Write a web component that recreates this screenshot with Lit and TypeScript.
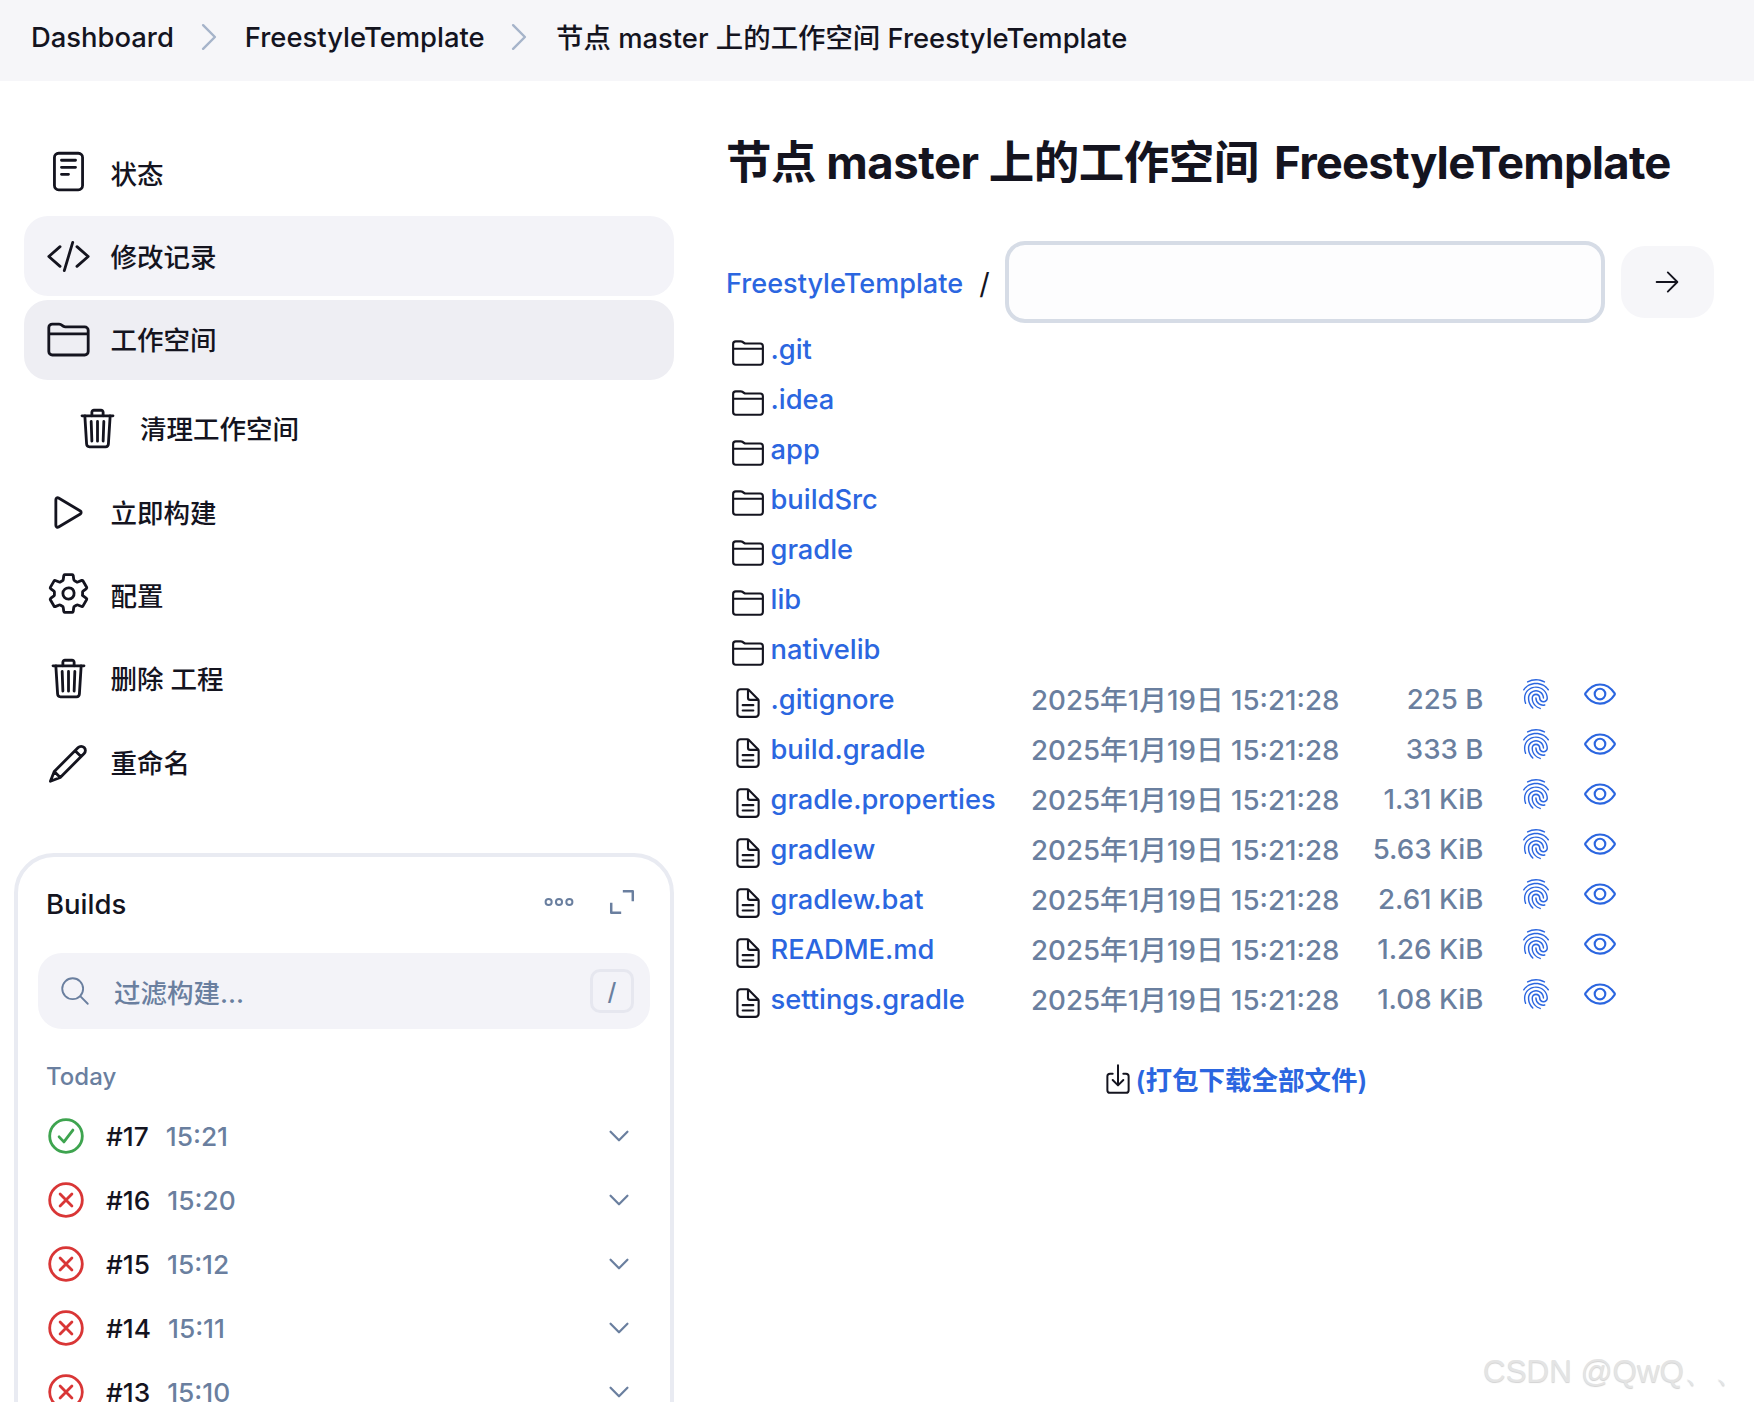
import { LitElement, html, css, svg } from "lit";
import { customElement } from "lit/decorators.js";

const I: Record<string, any> = {
  reader: svg`<rect x="96" y="48" width="320" height="416" rx="48" ry="48"/><path d="M176 128h160M176 208h160M176 288h80"/>`,
  code: svg`<path d="M160 368L32 256l128-112M352 368l128-112-128-112M304 96l-96 320"/>`,
  folder: svg`<path d="M440 432H72a40 40 0 01-40-40V120a40 40 0 0140-40h75.89a40 40 0 0122.19 6.72l27.84 18.56a40 40 0 0022.19 6.72H440a40 40 0 0140 40v240a40 40 0 01-40 40zM32 192h448"/>`,
  trash: svg`<path d="M112 112l20 320c.95 18.49 14.4 32 32 32h184c17.67 0 30.87-13.51 32-32l20-320"/><path d="M80 112h352"/><path d="M192 112V72h0a23.93 23.93 0 0124-24h80a23.93 23.93 0 0124 24h0v40M256 176v224M184 176l8 224M328 176l-8 224"/>`,
  play: svg`<path d="M112 111v290c0 17.44 17 28.52 31 20.16l247.9-148.37c12.12-7.25 12.12-26.33 0-33.58L143 90.84c-14-8.36-31 2.72-31 20.16z"/>`,
  gear: svg`<path d="M262.29 192.31a64 64 0 1057.4 57.4 64.13 64.13 0 00-57.4-57.4zM416.39 256a154.34 154.34 0 01-1.53 20.79l45.21 35.46a10.81 10.81 0 012.45 13.75l-42.77 74a10.81 10.81 0 01-13.14 4.59l-44.9-18.08a16.11 16.11 0 00-15.17 1.75A164.48 164.48 0 01325 400.8a15.94 15.94 0 00-8.82 12.14l-6.73 47.89a11.08 11.08 0 01-10.68 9.17h-85.54a11.11 11.11 0 01-10.69-8.87l-6.72-47.82a16.07 16.07 0 00-9-12.22 155.3 155.3 0 01-21.46-12.57 16 16 0 00-15.11-1.71l-44.89 18.07a10.81 10.81 0 01-13.14-4.58l-42.77-74a10.8 10.8 0 012.45-13.75l38.21-30a16.05 16.05 0 006-14.08c-.36-4.17-.58-8.33-.58-12.5s.21-8.27.58-12.35a16 16 0 00-6.07-13.94l-38.19-30A10.81 10.81 0 0149.48 186l42.77-74a10.81 10.81 0 0113.14-4.59l44.9 18.08a16.11 16.11 0 0015.17-1.75A164.48 164.48 0 01187 111.2a15.94 15.94 0 008.82-12.14l6.73-47.89A11.08 11.08 0 01213.23 42h85.54a11.11 11.11 0 0110.69 8.87l6.72 47.82a16.07 16.07 0 009 12.22 155.3 155.3 0 0121.46 12.57 16 16 0 0015.11 1.71l44.89-18.07a10.81 10.81 0 0113.14 4.58l42.77 74a10.8 10.8 0 01-2.45 13.75l-38.21 30a16.05 16.05 0 00-6.05 14.08c.33 4.14.55 8.3.55 12.47z"/>`,
  pencil: svg`<path d="M50 470L94 358L366 86A48 48 0 01434 154L162 426ZM331 121L399 189M94 358L162 426"/>`,
  search: svg`<path d="M221.09 64a157.09 157.09 0 10157.09 157.09A157.1 157.1 0 00221.09 64z"/><path d="M338.29 338.29L448 448"/>`,
  arrow: svg`<path d="M268 112l144 144-144 144M392 256H100"/>`,
  down: svg`<path d="M112 184l144 144 144-144"/>`,
  right: svg`<path d="M184 112l144 144-144 144"/>`,
  doc: svg`<path d="M416 221.25V416a48 48 0 01-48 48H144a48 48 0 01-48-48V96a48 48 0 0148-48h98.75a32 32 0 0122.62 9.37l141.26 141.26a32 32 0 019.37 22.62z"/><path d="M256 56v120a32 32 0 0032 32h120M176 288h160M176 368h160"/>`,
  eye: svg`<path d="M255.66 112c-77.94 0-157.89 45.11-220.83 135.33a16 16 0 00-.27 17.77C82.92 340.8 161.8 400 255.66 400c92.84 0 173.34-59.38 221.79-135.25a16.14 16.14 0 000-17.47C428.89 172.28 347.8 112 255.66 112z"/><circle cx="256" cy="256" r="80"/>`,
  dl: svg`<path d="M336 176h40a40 40 0 0140 40v208a40 40 0 01-40 40H136a40 40 0 01-40-40V216a40 40 0 0140-40h40"/><path d="M176 272l80 80 80-80M256 48v288"/>`,
  dots: svg`<circle cx="100" cy="256" r="46"/><circle cx="256" cy="256" r="46"/><circle cx="412" cy="256" r="46"/>`,
  expand: svg`<path d="M270 72h170v170M242 440H72V270"/>`,
  ok: svg`<circle cx="256" cy="256" r="232"/><path d="M158 268l68 72 128-168"/>`,
  bad: svg`<circle cx="256" cy="256" r="232"/><path d="M172 172l168 168M340 172L172 340"/>`,
};
const FP = "M390.42 75.28a10.45 10.45 0 01-5.32-1.44C340.72 50.08 302.35 40 256.35 40c-45.77 0-89.23 11.28-128.76 33.84C122 77 115.11 74.8 111.87 69a12.4 12.4 0 014.63-16.32A281.81 281.81 0 01256.35 16c49.23 0 92.23 11.28 139.39 36.48a12 12 0 014.85 16.08 11.3 11.3 0 01-10.17 6.72zm-330.79 126a11.73 11.73 0 01-6.7-2.16 12.26 12.26 0 01-2.78-16.8c22.89-33.6 52-60 86.69-78.48 72.58-38.84 165.51-39.12 238.32-.24 34.68 18.48 63.8 44.64 86.69 78a12.29 12.29 0 01-2.78 16.8 11.26 11.26 0 01-16.18-2.88c-20.8-30.24-47.15-54-78.36-70.56-66.34-35.28-151.18-35.28-217.29.24-31.44 16.8-57.79 40.8-78.59 71a10 10 0 01-9.02 4.08zM204.1 491a10.66 10.66 0 01-8.09-3.6C175.9 466.48 165 453 149.55 424c-16-29.52-24.27-65.52-24.27-104.16 0-71.28 58.71-129.36 130.84-129.36S387 248.56 387 319.84a11.56 11.56 0 11-23.11 0c0-58.08-48.32-105.36-107.72-105.36S148.4 261.76 148.4 319.84c0 34.56 7.39 66.48 21.49 92.4 14.8 27.6 25 39.36 42.77 58.08a12.67 12.67 0 010 17 12.44 12.44 0 01-8.56 3.68zm165.75-44.4c-27.51 0-51.78-7.2-71.66-21.36a129.1 129.1 0 01-55-105.36 11.57 11.57 0 1123.12 0 104.28 104.28 0 0044.84 85.44c16.41 11.52 35.6 17 58.72 17a147.41 147.41 0 0024-2.4c6.24-1.2 12.25 3.12 13.4 9.84a11.92 11.92 0 01-9.47 13.92 152.28 152.28 0 01-27.95 2.88zM323.38 496a13 13 0 01-3-.48c-36.76-10.56-60.8-24.72-86-50.4-32.37-33.36-50.16-77.76-50.16-125.28 0-38.88 32.36-70.56 72.2-70.56s72.2 31.68 72.2 70.56c0 25.68 21.5 46.56 48.08 46.56s48.08-20.88 48.08-46.56c0-90.48-76.27-163.92-170.13-163.92-66.66 0-127.67 38.4-155.18 97.92-9.24 19.68-13.87 42.72-13.87 66 0 17.52 1.55 45.12 14.57 81.12 2.32 6.24-.69 13.2-6.7 15.36a11.34 11.34 0 01-14.8-7 276.39 276.39 0 01-15.95-89.52c0-26.88 5.09-51.36 15.18-72.72 31.21-67.92 100.48-112 176.52-112 106.61 0 193.25 84.24 193.25 188 0 38.88-32.37 70.56-72.2 70.56s-72.2-31.68-72.2-70.56c0-25.68-21.5-46.56-48.08-46.56s-48.08 20.88-48.08 46.56c0 41 15.26 79.44 43.23 108.24 22 22.56 43 35 75.59 44.4 6.24 1.68 9.71 8.4 8.09 14.64a11.39 11.39 0 01-10.8 8.88z";

const icon = (name: string, cls = "") =>
  html`<svg class="ic ${cls}" viewBox="0 0 512 512">${I[name]}</svg>`;

const NAV = [
  { i: "reader", t: "状态", k: "lift" },
  { i: "code", t: "修改记录", c: "hover" },
  { i: "folder", t: "工作空间", c: "active" },
  { i: "trash", t: "清理工作空间", c: "sub" },
  { i: "play", t: "立即构建" },
  { i: "gear", t: "配置", k: "lift" },
  { i: "trash", t: "删除 工程" },
  { i: "pencil", t: "重命名" },
];
const BUILDS = [
  { n: "#17", t: "15:21", ok: true },
  { n: "#16", t: "15:20" },
  { n: "#15", t: "15:12" },
  { n: "#14", t: "15:11" },
  { n: "#13", t: "15:10" },
];
const DIRS = [".git", ".idea", "app", "buildSrc", "gradle", "lib", "nativelib"];
const FILES = [
  [".gitignore", "225 B"],
  ["build.gradle", "333 B"],
  ["gradle.properties", "1.31 KiB"],
  ["gradlew", "5.63 KiB"],
  ["gradlew.bat", "2.61 KiB"],
  ["README.md", "1.26 KiB"],
  ["settings.gradle", "1.08 KiB"],
];

@customElement("app-root")
export class AppRoot extends LitElement {
  static styles = css`
    :host {
      display: block;
      position: relative;
      width: 1754px;
      height: 1402px;
      overflow: hidden;
      background: #fff;
      color: #14141f;
      font-family: Inter, "Noto Sans CJK SC", sans-serif;
      font-size: 27.5px;
      font-weight: 500;
    }
    * { box-sizing: border-box; }
    a { color: inherit; text-decoration: none; }
    .ic {
      display: block;
      flex: none;
      width: 45px;
      height: 45px;
      fill: none;
      stroke: currentColor;
      stroke-width: 32;
      stroke-linecap: round;
      stroke-linejoin: round;
    }
    .crumbs {
      height: 81px;
      background: #f6f6f9;
      display: flex;
      align-items: center;
      padding: 0 0 7px 31px;
      font-size: 27.4px;
    }
    .crumbs .sep { width: 42px; height: 42px; color: #a6b4ca; margin: 0 14.5px 0 14.5px; stroke-width: 30; }
    .crumbs .sep2 { margin: 0 16px 0 13.5px; }
    .crumbs .cur { margin-bottom: 3px; }
    .layout { display: grid; grid-template-columns: 726px 1fr; }
    nav { padding: 52px 0 0 24px; width: 674px; display: flex; flex-direction: column; gap: 3.3px; }
    .item {
      height: 80px;
      border-radius: 24px;
      display: flex;
      align-items: center;
      gap: 20px;
      padding-left: 21.5px;
      font-size: 26.5px;
    }
    .item span { margin-bottom: 2px; }
    .item .lift { margin-bottom: 3px; }
    .item.hover { background: #f3f3f8; }
    .item.active { background: #eeeef3; }
    .item.sub { padding-left: 51px; margin-top: 6px; }
    .card {
      margin: 51px 0 0 14px;
      width: 660px;
      height: 700px;
      border: 4px solid #e9ebf2;
      border-radius: 40px;
    }
    .head {
      height: 94px;
      margin-bottom: 2px;
      padding: 0 33px 0 28px;
      display: flex;
      align-items: center;
    }
    .head .title { flex: 1; font-size: 27.5px; }
    .slate { color: #6a7f9f; }
    .head .dots { width: 34px; height: 34px; margin: 0 31.5px 4px 0; stroke-width: 30; }
    .head .expand { width: 30px; height: 30px; margin-bottom: 4px; stroke-width: 42; stroke-linecap: butt; stroke-linejoin: round; }
    .filter {
      margin: 0 20px 0 20px;
      height: 76px;
      background: #f3f3f8;
      border-radius: 24px;
      display: flex;
      align-items: center;
      padding: 0 16px 0 20px;
      font-size: 26.5px;
    }
    .filter .search { width: 34px; height: 34px; margin-right: 22px; stroke-width: 28; }
    .filter .ph { flex: 1; }
    .kbd {
      width: 44px;
      height: 44px;
      border: 3px solid #e6e7ef;
      border-radius: 10px;
      display: flex;
      align-items: center;
      justify-content: center;
      font-size: 24px;
    }
    .today { margin: 33px 0 12px 28px; height: 30px; line-height: 30px; font-size: 24px; }
    .build {
      height: 64px;
      display: flex;
      align-items: center;
      padding: 0 36px 0 30px;
      font-size: 26.3px;
    }
    .build .st { width: 36px; height: 36px; stroke-width: 40; margin-right: 22px; }
    .build .st.good { color: #3ea44f; }
    .build .st.fail { color: #d93636; }
    .build .time { flex: 1; margin-left: 17px; }
    .build .chev { width: 30px; height: 30px; stroke-width: 38; }
    main { padding: 52px 12px 0 0; }
    h1 {
      margin: 0 0 48px;
      font-size: 45.5px;
      line-height: 60px;
      font-weight: 700;
      letter-spacing: -0.5px;
      white-space: nowrap;
    }
    h1 span { margin-left: 5px; letter-spacing: -0.8px; }
    .link { color: #2b66e0; }
    .path { display: flex; align-items: center; height: 82px; }
    .path .link { font-size: 27.1px; margin-top: 2px; }
    .path .slash { margin: 2px 15px 0 16px; font-weight: 400; font-size: 29px; }
    .path .input {
      width: 600px;
      height: 82px;
      border: 4px solid #d6dce6;
      border-radius: 20px;
      background: #fdfdfe;
    }
    .path .go {
      margin-left: 16px;
      width: 93px;
      height: 72px;
      border-radius: 24px;
      background: #f6f6f9;
      display: flex;
      align-items: center;
      justify-content: center;
    }
    .path .go .ic { width: 34px; height: 34px; stroke-width: 28; }
    .row {
      height: 50px;
      display: flex;
      align-items: center;
      padding-left: 5px;
      white-space: nowrap;
      font-size: 27.7px;
    }
    .row > .ic { width: 34px; height: 34px; margin: 9px 5.5px 0 0; }
    .row .link { font-size: 27.3px; margin-top: 2px; }
    .row .name { width: 260.5px; }
    .row .date { width: 307px; }
    .row .size { width: 145.5px; text-align: right; margin-top: 2px; }
    .row .fp { width: 32px; height: 32px; margin: -9px 0 0 36.5px; fill: #2b66e0; }
    .row .eye { width: 34px; height: 34px; margin: -9px 0 0 31px; color: #2b66e0; stroke-width: 32; }
    .zip {
      margin-top: 36px;
      display: flex;
      align-items: center;
      justify-content: center;
      font-weight: 600;
      font-size: 26.5px;
    }
    .zip .ic { width: 34px; height: 34px; margin-right: 1px; stroke-width: 30; }
    .wm {
      position: absolute;
      left: 1483px;
      top: 1351px;
      font: 400 31.4px "Liberation Sans", sans-serif;
      color: #e4e4e4;
      text-shadow: 0 1px 1px #d2d2d2;
      white-space: nowrap;
    }
  `;

  render() {
    return html`
      <div class="crumbs">
        <a>Dashboard</a>${icon("right", "sep")}
        <a>FreestyleTemplate</a>${icon("right", "sep sep2")}
        <a class="cur">节点 master 上的工作空间 FreestyleTemplate</a>
      </div>
      <div class="layout">
        <aside>
          <nav>
            ${NAV.map(
              (n) => html`<a class="item ${n.c ?? ""}">${icon(n.i, n.k ?? "")}<span>${n.t}</span></a>`
            )}
          </nav>
          <section class="card">
            <div class="head">
              <span class="title">Builds</span>
              <span class="slate">${icon("dots", "dots")}</span>
              <span class="slate">${icon("expand", "expand")}</span>
            </div>
            <div class="filter slate">
              ${icon("search", "search")}
              <span class="ph">过滤构建...</span>
              <span class="kbd">/</span>
            </div>
            <div class="today slate">Today</div>
            ${BUILDS.map(
              (b) => html`<div class="build">
                ${icon(b.ok ? "ok" : "bad", b.ok ? "st good" : "st fail")}
                <span>${b.n}</span>
                <span class="time slate">${b.t}</span>
                <span class="slate">${icon("down", "chev")}</span>
              </div>`
            )}
          </section>
        </aside>
        <main>
          <h1>节点 master 上的工作空间 <span>FreestyleTemplate</span></h1>
          <div class="path">
            <a class="link">FreestyleTemplate</a>
            <span class="slash">/</span>
            <div class="input"></div>
            <div class="go">${icon("arrow")}</div>
          </div>
          ${DIRS.map(
            (d) => html`<div class="row">${icon("folder")}<a class="link">${d}</a></div>`
          )}
          ${FILES.map(
            ([f, s]) => html`<div class="row">
              ${icon("doc")}
              <a class="link name">${f}</a>
              <span class="date slate">2025年1月19日 15:21:28</span>
              <span class="size slate">${s}</span>
              <svg class="fp" viewBox="0 0 512 512"><path d=${FP}></path></svg>
              <svg class="ic eye" viewBox="0 0 512 512">${I.eye}</svg>
            </div>`
          )}
          <div class="zip">${icon("dl")}<a class="link">(打包下载全部文件)</a></div>
        </main>
      </div>
      <div class="wm">CSDN @QwQ、、</div>
    `;
  }
}
